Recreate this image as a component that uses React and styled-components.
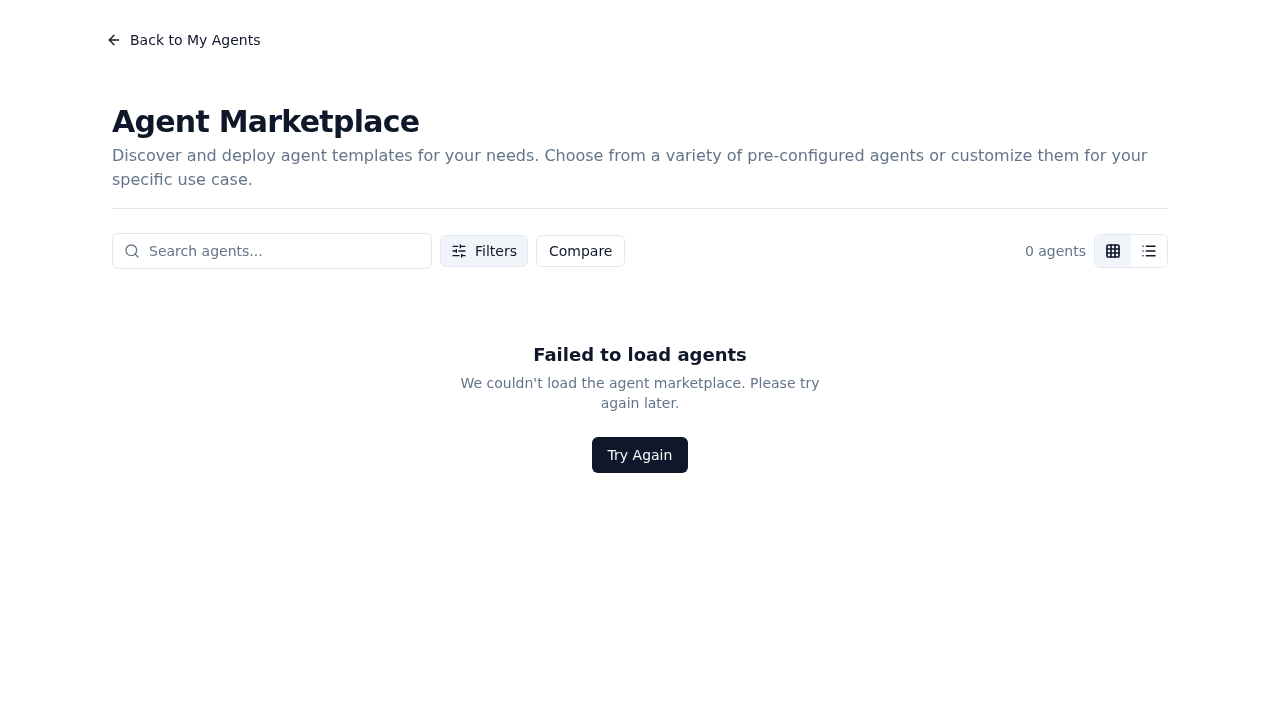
import React from "react";
import styled, { createGlobalStyle } from "styled-components";
import { ArrowLeft, Search, SlidersHorizontal, Grid3x3, List } from "lucide-react";

const Global = createGlobalStyle`
  * { box-sizing: border-box; }
  html, body { margin: 0; padding: 0; background: #fff; }
  body {
    font-family: "DejaVu Sans", sans-serif;
    color: #0f172a;
  }
`;

const Page = styled.main`
  width: 1056px;
  margin: 0 auto;
  padding-top: 24px;
  will-change: transform;
`;

const BackLink = styled.button`
  display: flex;
  align-items: center;
  gap: 8px;
  height: 32px;
  margin-left: -6px;
  padding: 0;
  border: 0;
  background: none;
  color: #0f172a;
  font: 14px/20px "DejaVu Sans", sans-serif;
`;

const Header = styled.header`
  margin-top: 48px;
  padding-bottom: 16px;
  border-bottom: 1px solid #e2e8f0;
`;

const Title = styled.h1`
  margin: 0 0 4px;
  font-size: 30px;
  line-height: 36px;
  font-weight: 700;
  letter-spacing: -0.75px;
  color: #0f172a;
`;

const Description = styled.p`
  margin: 0;
  font-size: 16px;
  line-height: 24px;
  color: #64748b;
`;

const Toolbar = styled.div`
  display: flex;
  align-items: center;
  justify-content: space-between;
  margin-top: 24px;
`;

const ToolGroup = styled.div`
  display: flex;
  align-items: center;
  gap: 8px;
`;

const SearchBox = styled.label`
  display: flex;
  align-items: center;
  gap: 9px;
  width: 320px;
  height: 36px;
  padding: 0 12px 0 11px;
  border: 1px solid #e2e8f0;
  border-radius: 6px;
  color: #64748b;
`;

const SearchInput = styled.input`
  flex: 1;
  min-width: 0;
  border: 0;
  outline: 0;
  padding: 0;
  background: none;
  font: 14px/20px "DejaVu Sans", sans-serif;
  color: #0f172a;
  &::placeholder { color: #64748b; opacity: 1; }
`;

const ToolButton = styled.button`
  display: flex;
  align-items: center;
  gap: 8px;
  height: 32px;
  padding: 0 ${(p) => (p.$active ? "10px" : "12px")};
  border: 1px solid #e2e8f0;
  border-radius: 6px;
  background: ${(p) => (p.$active ? "#f1f5f9" : "#fff")};
  color: #0f172a;
  font: 14px/20px "DejaVu Sans", sans-serif;
`;

const Count = styled.span`
  font-size: 14px;
  line-height: 20px;
  color: #64748b;
`;

const ViewToggle = styled.div`
  display: flex;
  height: 34px;
  border: 1px solid #e2e8f0;
  border-radius: 6px;
  overflow: hidden;
`;

const ViewButton = styled.button`
  display: flex;
  align-items: center;
  justify-content: center;
  width: 36px;
  padding: 0;
  border: 0;
  background: ${(p) => (p.$active ? "#f1f5f9" : "#fff")};
  color: #0f172a;
`;

const ErrorState = styled.section`
  display: flex;
  flex-direction: column;
  align-items: center;
  margin-top: 72px;
  text-align: center;
`;

const ErrorTitle = styled.h2`
  margin: 0 0 4px;
  font-size: 18px;
  line-height: 28px;
  font-weight: 600;
  color: #0f172a;
`;

const ErrorText = styled.p`
  width: 384px;
  margin: 0 0 24px;
  font-size: 14px;
  line-height: 20px;
  color: #64748b;
`;

const RetryButton = styled.button`
  height: 36px;
  width: 96px;
  padding: 0;
  border: 0;
  border-radius: 6px;
  background: #0f172a;
  color: #f8fafc;
  font: 14px/20px "DejaVu Sans", sans-serif;
`;

export default function App() {
  return (
    <>
      <Global />
      <Page>
        <BackLink>
          <ArrowLeft size={16} />
          Back to My Agents
        </BackLink>
        <Header>
          <Title>Agent Marketplace</Title>
          <Description>
            Discover and deploy agent templates for your needs. Choose from a variety of pre-configured agents or customize them for your specific use case.
          </Description>
        </Header>
        <Toolbar>
          <ToolGroup>
            <SearchBox>
              <Search size={16} />
              <SearchInput placeholder="Search agents..." />
            </SearchBox>
            <ToolButton $active>
              <SlidersHorizontal size={16} />
              Filters
            </ToolButton>
            <ToolButton>Compare</ToolButton>
          </ToolGroup>
          <ToolGroup>
            <Count>0 agents</Count>
            <ViewToggle>
              <ViewButton $active><Grid3x3 size={16} strokeWidth={2.5} /></ViewButton>
              <ViewButton><List size={16} strokeWidth={2.25} /></ViewButton>
            </ViewToggle>
          </ToolGroup>
        </Toolbar>
        <ErrorState>
          <ErrorTitle>Failed to load agents</ErrorTitle>
          <ErrorText>We couldn't load the agent marketplace. Please try again later.</ErrorText>
          <RetryButton>Try Again</RetryButton>
        </ErrorState>
      </Page>
    </>
  );
}
